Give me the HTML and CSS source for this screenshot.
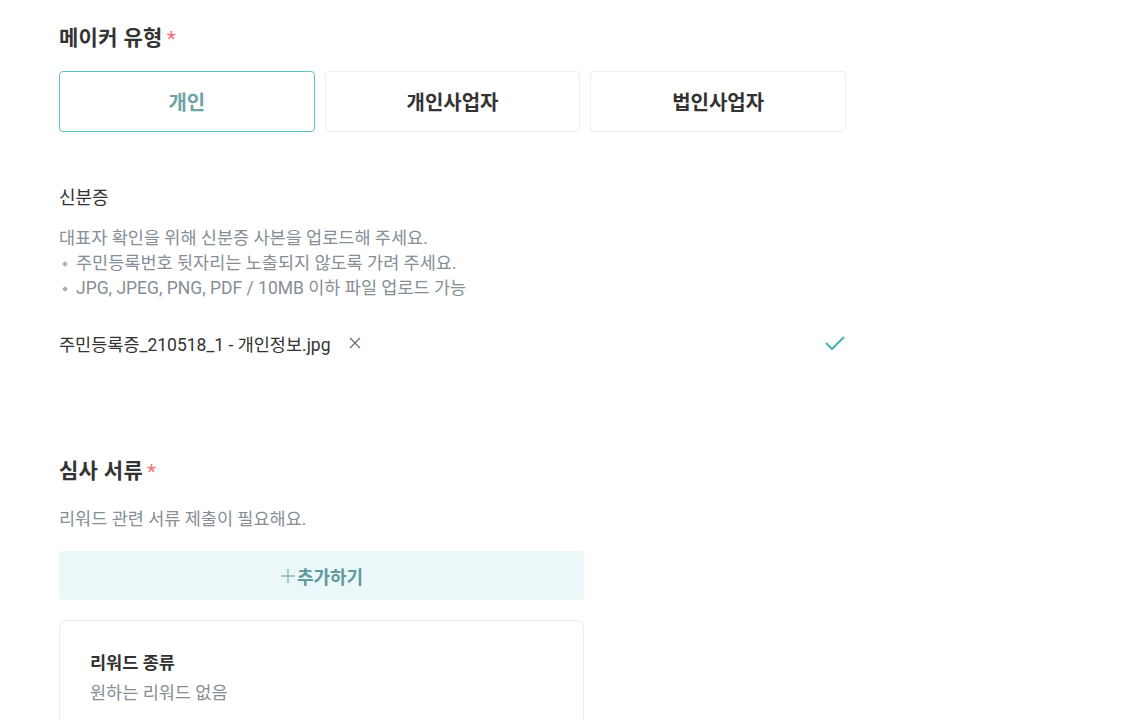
FILE: index.html
```html
<!DOCTYPE html>
<html lang="ko">

<head>
    <meta charset="UTF-8">
    <meta name="viewport" content="width=device-width, initial-scale=1.0">
    <title>메이커 정보</title>
    <link rel="stylesheet" href="styles.css">
</head>

<body>

    <div class="maker-form">
        <!-- 메이커 유형 -->
        <h2 class="section-title">메이커 유형<span class="required">*</span></h2>
        <div class="type-group">
            <button type="button" class="type-btn active">개인</button>
            <button type="button" class="type-btn">개인사업자</button>
            <button type="button" class="type-btn">법인사업자</button>
        </div>

        <!-- 신분증 -->
        <h3 class="field-title">신분증</h3>
        <div class="field-desc">
            <p>대표자 확인을 위해 신분증 사본을 업로드해 주세요.</p>
            <ul>
                <li>주민등록번호 뒷자리는 노출되지 않도록 가려 주세요.</li>
                <li>JPG, JPEG, PNG, PDF / 10MB 이하 파일 업로드 가능</li>
            </ul>
        </div>

        <div class="file-row">
            <span class="file-name">주민등록증_210518_1 - 개인정보.jpg</span>
            <button type="button" class="file-remove" aria-label="삭제">
                <svg width="12" height="12" viewBox="0 0 12 12">
                    <path d="M1 1L11 11M11 1L1 11" stroke="#666" stroke-width="1.1" fill="none" />
                </svg>
            </button>
            <svg class="file-check" width="22" height="16" viewBox="0 0 22 16">
                <path d="M2 8L8 14L20 2" stroke="#4fb0ad" stroke-width="2.2" fill="none" />
            </svg>
        </div>

        <!-- 심사 서류 -->
        <h2 class="section-title docs-title">심사 서류<span class="required">*</span></h2>
        <p class="docs-desc">리워드 관련 서류 제출이 필요해요.</p>

        <div class="docs-box">
            <button type="button" class="add-btn">
                <svg class="plus" width="16" height="16" viewBox="0 0 16 16">
                    <path d="M8 1V15M1 8H15" stroke="#86b9b9" stroke-width="1.4" fill="none" />
                </svg>추가하기
            </button>

            <div class="reward-card">
                <div class="reward-label">리워드 종류</div>
                <div class="reward-value">원하는 리워드 없음</div>
            </div>
        </div>
    </div>

</body>

</html>
```

FILE: styles.css
```css
/* General Styles */
html,
body {
    margin: 0;
    background-color: #ffffff;
    font-family: Roboto, "Noto Sans CJK KR", sans-serif;
    color: #333;
}

.maker-form {
    width: 787px;
    padding: 24px 0 0 59px;
}

.section-title {
    margin: 0;
    font-size: 21px;
    line-height: 28px;
    font-weight: 700;
    letter-spacing: 0.3px;
    color: #333;
}

.required {
    color: #f0727a;
    font-size: 21px;
    font-weight: 400;
    margin-left: 4px;
    vertical-align: -1px;
}

.type-group {
    display: flex;
    gap: 10px;
    margin-top: 18px;
}

.type-btn {
    flex: 1;
    height: 61px;
    background: #fff;
    border: 1px solid #eeeeee;
    border-radius: 4px;
    font-family: inherit;
    font-size: 20px;
    font-weight: 700;
    color: #333;
    cursor: pointer;
}

.type-btn.active {
    border-color: #5ec4c0;
    color: #6ea3a3;
}

.field-title {
    margin: 54px 0 0;
    font-size: 18px;
    line-height: 24px;
    font-weight: 400;
}

.field-desc {
    margin-top: 16px;
    font-size: 17.5px;
    line-height: 25px;
    color: #868e96;
}

.field-desc p {
    margin: 0;
}

.field-desc ul {
    margin: 0;
    padding: 0;
    list-style: none;
}

.field-desc li {
    position: relative;
    padding-left: 17px;
}

.field-desc li::before {
    content: "";
    position: absolute;
    left: 4px;
    top: 11px;
    width: 4px;
    height: 4px;
    transform: rotate(45deg);
    background: #a8b0b7;
}

.file-row {
    display: flex;
    align-items: center;
    margin-top: 30px;
    height: 24px;
    font-size: 17.5px;
}

.file-name {
    color: #333;
}

.file-remove {
    border: none;
    background: none;
    padding: 0;
    margin-left: 18px;
    display: flex;
    cursor: pointer;
}

.file-check {
    margin-left: auto;
}

.docs-title {
    margin-top: 102px;
}

.docs-desc {
    margin: 22px 0 0;
    font-size: 17.5px;
    line-height: 22px;
    color: #868e96;
}

.docs-box {
    width: 525px;
    margin-top: 21px;
}

.add-btn {
    width: 100%;
    height: 49px;
    border: none;
    border-radius: 4px;
    background: #ebf7f9;
    font-family: inherit;
    font-size: 18px;
    font-weight: 700;
    color: #5f9a9c;
    cursor: pointer;
    display: flex;
    align-items: center;
    justify-content: center;
    gap: 1px;
}

.reward-card {
    margin-top: 20px;
    border: 1px solid #e9ecef;
    border-radius: 8px;
    padding: 31px 30px 40px;
}

.reward-label {
    font-size: 17.5px;
    line-height: 22px;
    font-weight: 700;
    color: #333;
}

.reward-value {
    margin-top: 8px;
    font-size: 17.5px;
    line-height: 22px;
    color: #868e96;
}
```
